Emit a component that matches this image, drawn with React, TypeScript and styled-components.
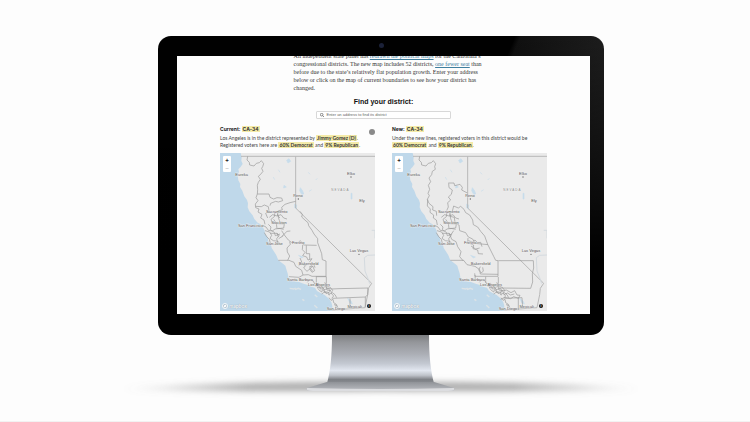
import React from 'react';
import styled, { createGlobalStyle } from 'styled-components';

const Global = createGlobalStyle`
  * { box-sizing: border-box; }
  body { margin: 0; background: #fdfdfd; }
`;

const sans = 'Inter, "Liberation Sans", sans-serif';
const copy = 'Lato, "Liberation Sans", sans-serif';
const serif = '"Liberation Serif", serif';

const Page = styled.main`
  min-height: 100vh;
  padding: 36px 146px 0 158px;
  border-bottom: 1px solid #f2f2f2;
  overflow: hidden;
  font-family: ${sans};
`;

const Monitor = styled.section`
  position: relative;
  padding: 20px 14px 21px 19px;
  border-radius: 13px;
  background:
    linear-gradient(to bottom, transparent 0%, #000 75%),
    linear-gradient(112deg, #010101 63%, #101010 64%, #262626 90%);
`;

const Camera = styled.span`
  position: absolute;
  top: 7px;
  left: 50%;
  width: 5px;
  height: 5px;
  margin-left: -2px;
  border-radius: 50%;
  background: #1b2138;
`;

const Screen = styled.div`
  display: flex;
  flex-direction: column;
  justify-content: flex-end;
  aspect-ratio: 413 / 258;
  padding: 0 43px 3px;
  overflow: hidden;
  background: #fdfdfd;
  color: #222;
`;

const Intro = styled.p`
  align-self: center;
  width: 55%;
  margin: 0 0 5px;
  font: 6px/8px ${serif};
  white-space: nowrap;
  color: #333;
`;

const TextLink = styled.a`
  color: #3f7f9f;
  text-decoration: underline;
`;

const Title = styled.h1`
  margin: 0 0 4px;
  font: 700 7px/10px "Liberation Sans", sans-serif;
  text-align: center;
  color: #111;
`;

const Search = styled.label`
  display: flex;
  align-items: center;
  align-self: center;
  gap: 2px;
  width: 41%;
  height: 9px;
  padding: 0 3px;
  border: 1px solid #d8d8d8;
  border-radius: 1px;
  background: #fff;
`;

const SearchInput = styled.input`
  flex: 1;
  min-width: 0;
  padding: 0;
  border: 0;
  outline: 0;
  background: transparent;
  font: 4px/6px "Liberation Sans", sans-serif;
  &::placeholder { color: #666; opacity: 1; }
`;

const Columns = styled.div`
  display: grid;
  grid-template-columns: 1fr 1fr;
  gap: 17px;
  margin-top: 6px;
`;

const District = styled.section`
  position: relative;
  min-width: 0;
`;

const Subhead = styled.h2`
  margin: 0 0 2px;
  font: 700 5px/8px ${sans};
`;

const Summary = styled.p`
  margin: 0 0 4px;
  font: 5px/7px ${copy};
  white-space: nowrap;
  color: #444;
`;

const Mark = styled.mark`
  padding: 0 1px;
  background: #f4eba9;
  color: #333;
  font-weight: 700;
`;

const Cursor = styled.span`
  position: absolute;
  top: 4px;
  right: 0;
  width: 6px;
  height: 6px;
  border-radius: 50%;
  background: #8a8a8a;
`;

const MapFrame = styled.div`
  position: relative;
  aspect-ratio: 155 / 158;
  overflow: hidden;
`;

const MapArt = styled.svg`
  display: block;
  width: 100%;
  height: 100%;
  font-family: "Liberation Sans", sans-serif;
`;

const ZoomControl = styled.div`
  position: absolute;
  top: 3px;
  left: 3px;
  display: grid;
  width: 8px;
  border-radius: 1px;
  background: #fff;
`;

const ZoomButton = styled.button<{ $muted?: boolean }>`
  height: 8px;
  padding: 0;
  border: 0;
  background: transparent;
  font: 700 6px/8px ${sans};
  text-align: center;
  color: ${(p) => (p.$muted ? '#ccc' : '#222')};
`;

const MapLogo = styled.a`
  position: absolute;
  bottom: 2px;
  left: 2px;
  display: flex;
  align-items: center;
  gap: 1px;
  font: 700 5px/6px ${copy};
  color: #f4f7f9;
  text-decoration: none;
  text-shadow: 0 0 1px #71808c;
`;

const InfoButton = styled.button`
  position: absolute;
  right: 4px;
  bottom: 3px;
  width: 4px;
  height: 4px;
  padding: 0;
  border: 0;
  border-radius: 50%;
  background: #111;
  color: #fff;
  font: 700 3px/4px ${sans};
`;

const Stand = styled.svg`
  display: block;
  width: calc(100% + 84px);
  margin: 0 -42px;
`;

const COAST =
  'M15 15H77L80 28 79 38 83 48 76 58 70 64 72 72 68 80 70 97 76 108 75 117 82 128 88 145 96 156 99 166 98 178 103 190 113 202 118 213 128 224 137 229 145 240 149 248 150 258 158 268 160 280 168 290 170 300 178 312 184 322 190 337 204 347 211 353 214 364 218 376 222 398 236 400 252 402 268 408 280 411 288 416 300 419 306 429 318 436 329 441 342 452 349 463 352 474 352 489H15Z';

const BAY = [
  'M143 232l10 5 7 10 12 2 8-6 12-2 14 3M150 248l14 4 6 10-5 9 10 7 14 2 8 10M148 254l7 12 8 8 3 12 12 3 10-5-3-12 7-9-6-8M160 229l8 8-2 8 12 8 3 10 14-5M172 226l36 2-2 12-18 2M176 214l8 12 2 16M166 256h20l4 10',
  'M163 208l10-8 13 4 12-4 8 10 10 3M180 192l-2 14-10 8 4 12M196 188l-8 8 3 16 5 12',
];

const LA =
  'M277 403l6-7 12 3 4 9 12-2 3 7-7 7M300 413l14 2 2 8 10-1 3 9 11 2 3 9M306 420l16-2 6 7 12-4 6 9-9 6-10-3-7 5M318 410l4 9 14-5 10 4 7 9-5 8 8 9-6 7M324 427l12 10M310 424l10 8 3-8M332 412l4 14 12 2M340 440l12-6 8 6 5 9M329 402l5 10 8-3M342 449l6 8 6-3 2 10 8 5-2 14M357 470l9 2 5 12';

const MAPS = {
  current: [
    'M98 25L96 36 103 43 104 51 117 54 124 46 133 44 139 38 146 47 143 56 140 61 144 70 136 80 130 85 136 94 130 103 127 112 128 125 127 138H162L165 148 176 153 186 149 200 150 203 158 190 162 182 160 167 166 165 173',
    'M127 138L123 149 129 158 121 168 122 179 132 183 129 192 141 199 137 210 147 216 150 229',
    'M122 175L139 176 148 171 160 176 162 190 152 196 158 210',
    'M242 160L225 164 210 169 200 178 202 186 190 188 187 202 195 210',
    'M255 190L262 199 260 207 273 219 279 224 281 233 291 247 297 258 308 272 308 284 320 317 322 335 333 339V385',
    'M200 248L208 261 220 276 229 283 247 286 256 278 266 291 305 292M200 266L216 250 226 249M191 272l14-9',
    'M224 281L226 289 216 300 217 312 224 324 218 337M190 337H222L237 343 242 355 260 367 264 381 280 380 291 385H333M263 291l-1 14 8 8-7 10 12 4 4 9 12-4-8 11M256 345l15 8-5 7 10 10 8-7 7 10 8-5-6-14-10 2M274 292v25h10v16',
    'M304 385V404M304 386h30v34M336 420L350 423 372 422 459 420M352 451L451 447M405 451V480M459 420L458 440 451 447V478',
    'M271 352l12-6 9 10-10 8M284 358l9 12M255 330l6 14-10 9M296 347l4 12M222 386l30 2 12-7',
  ],
  next: [
    'M98 25L96 36 103 43 104 51 117 54 124 46 133 44 139 38 146 47 143 56 145 64 136 70 134 80 126 90 131 101 124 112 128 124 123 136 127 143 121 154 126 166 138 176 137 186 148 190 149 203',
    'M184 105H201L203 113 219 109 226 118 224 126 241 135M185 106L186 119 196 126 193 139 184 147 191 156 182 164 184 177 179 188',
    'M122 154L121 174 130 183 129 193 140 201 139 210 148 216 151 231',
    'M196 190L200 174 214 180 221 175 231 184 236 194 248 201 257 216 259 230 272 237 281 250 293 264 302 289',
    'M190 190L189 205 202 208 204 224 216 231 218 248 236 254 244 267 257 273 264 286 303 290',
    'M200 248L190 263 194 274 207 281 212 296 222 311 218 326 229 339M190 337H230L240 350 264 355 278 365 280 378 333 379',
    'M302 289L320 325 326 337 333 338V385H264L263 376M243 270l-1 14 18 7-2 11 14 4 2 11 14 1M280 356l-5 10 8 9 6-6-2-11M334 338H439L440 360 436 377 437 402 431 421 336 420',
    'M264 381l1 18M296 386V404M334 387v31M352 451L405 449 407 480M394 449V486',
    'M244 278l12 4 8-6 7 8 10-1 4 13M278 300l-12 3-14-9M340 430l18-4 14 8 11-6 7 13 9 1-5 9-14-5-9 6-18-4-12 6M350 440l12-5 8 6 12-3',
  ],
};

type Label = [string, number, number];
const LABELS: Label[] = [
  ['Eureka', 80, 83],
  ['Elko', 408, 82],
  ['Ely', 441, 162],
  ['Reno', 249, 147],
  ['Sacramento', 185, 194],
  ['Stockton', 192, 227],
  ['San Francisco', 107, 236],
  ['San Jose', 178, 290],
  ['Fresno', 250, 287],
  ['Las Vegas', 432, 313],
  ['Bakersfield', 281, 352],
  ['Santa Barbara', 255, 399],
  ['Los Angeles', 312, 413],
  ['Mexicali', 419, 481],
  ['San Diego', 363, 486],
];

function CaliforniaMap({ kind }: { kind: keyof typeof MAPS }) {
  return (
    <MapFrame>
      <MapArt viewBox="15 15 465 474" preserveAspectRatio="xMidYMid slice" role="img" aria-label="California congressional districts">
        <rect x="15" y="15" width="465" height="474" fill="#eaeaea" />
        <path d={COAST} fill="#bfd8ea" />
        <path
          d="M222 32l5 8-8 5-4-8zM256 119l7 10 3 9-6 1-6-11zM239 168l6 3-1 12-5-4zM398 451l10 8 4 9-7-3zM207 112l7 5-8 3zM408 136h3v17h-3zM280 73l5 6M190 65l5 8M175 87l4 8M302 96l5-5M282 130l8-5M250 322l15 5-7 3"
          fill="#c7ddec"
          stroke="#c7ddec"
          strokeWidth="2"
        />
        <path d="M224 421l12 2 6-3M240 425l10-4 8 3M262 454l6 4M299 440l8 7M298 472l9 8" fill="none" stroke="#dde3e6" strokeWidth="4" />
        <g fill="none" stroke="#b8b8b8" strokeWidth="3" strokeLinejoin="round">
          <path d="M78 25H480M242 25V180L470 406L460 421L458 440L450 479L352 486" />
        </g>
        <path d="M480 321l-22 1-10 7 2 40 8 20 6 18M470 247h10v24" fill="none" stroke="#d4dadf" strokeWidth="3" />
        <g fill="none" stroke="#999" strokeWidth="2" strokeLinejoin="round">
          {[...MAPS[kind], ...BAY, LA].map((d) => (
            <path key={d} d={d} />
          ))}
        </g>
        <g fill="#555" textAnchor="middle" stroke="#f2f2f2" strokeWidth="2" paintOrder="stroke" fontSize="12">
          {LABELS.map(([name, x, y]) => (
            <text key={name} x={x} y={y}>{name}</text>
          ))}
          <text x="376" y="129" fontSize="9" letterSpacing="3" fill="#8b8b8b">NEVADA</text>
        </g>
        <g fill="#666">
          <circle cx="408" cy="87" r="2" />
          <circle cx="250" cy="153" r="2" />
          <circle cx="432" cy="319" r="2" />
        </g>
      </MapArt>
      <ZoomControl>
        <ZoomButton type="button" aria-label="Zoom in">+</ZoomButton>
        <ZoomButton type="button" aria-label="Zoom out" $muted>−</ZoomButton>
      </ZoomControl>
      <MapLogo href="#mapbox">
        <svg width="6" height="6" viewBox="0 0 12 12" aria-hidden="true">
          <circle cx="6" cy="6" r="5" fill="#a9bdcb" stroke="#f6f8fa" strokeWidth="2" />
          <path d="M3 9l1-4 3-2 2 3-2 2z" fill="#fff" />
        </svg>
        mapbox
      </MapLogo>
      <InfoButton type="button" aria-label="Map information">i</InfoButton>
    </MapFrame>
  );
}

export default function App() {
  return (
    <>
      <Global />
      <Page>
        <Monitor>
          <Camera />
          <Screen>
            <Intro>
              An independent state panel has <TextLink href="#maps">redrawn the political maps</TextLink> for the California’s<br />
              congressional districts. The new map includes 52 districts, <TextLink href="#seat">one fewer seat</TextLink> than<br />
              before due to the state’s relatively flat population growth. Enter your address<br />
              below or click on the map of current boundaries to see how your district has<br />
              changed.
            </Intro>
            <Title>Find your district:</Title>
            <Search>
              <svg width="4" height="4" viewBox="0 0 12 12" fill="none" stroke="#555" strokeWidth="2" aria-hidden="true">
                <circle cx="5" cy="5" r="4" />
                <path d="M8 8l4 4" />
              </svg>
              <SearchInput aria-label="Address" placeholder="Enter an address to find its district" />
            </Search>
            <Columns>
              <District>
                <Subhead>Current: <Mark>CA-34</Mark></Subhead>
                <Summary>
                  Los Angeles is in the district represented by <Mark>Jimmy Gomez (D)</Mark>.<br />
                  Registered voters here are <Mark>60% Democrat</Mark> and <Mark>9% Republican</Mark>.
                </Summary>
                <CaliforniaMap kind="current" />
                <Cursor />
              </District>
              <District>
                <Subhead>New: <Mark>CA-34</Mark></Subhead>
                <Summary>
                  Under the new lines, registered voters in this district would be<br />
                  <Mark>60% Democrat</Mark> and <Mark>9% Republican</Mark>.
                </Summary>
                <CaliforniaMap kind="next" />
              </District>
            </Columns>
          </Screen>
        </Monitor>
        <Stand viewBox="116 335 530 66" aria-hidden="true">
          <defs>
            <linearGradient id="neck" x1="0" y1="0" x2="0" y2="1">
              <stop offset="0" stopColor="#7b7d80" />
              <stop offset="0.15" stopColor="#94969a" />
              <stop offset="0.4" stopColor="#acafb6" />
              <stop offset="0.6" stopColor="#c4c9d2" />
              <stop offset="0.74" stopColor="#e2e7f0" />
              <stop offset="0.84" stopColor="#bfc3ca" />
              <stop offset="0.93" stopColor="#7d8085" />
              <stop offset="1" stopColor="#8a8d92" />
            </linearGradient>
            <linearGradient id="foot" x1="0" y1="0" x2="0" y2="1">
              <stop offset="0" stopColor="#8f9297" />
              <stop offset="1" stopColor="#bcbec3" />
            </linearGradient>
            <linearGradient id="fade" x1="0" y1="0" x2="1" y2="0">
              <stop offset="0" stopColor="#888" stopOpacity="0" />
              <stop offset="0.25" stopColor="#888" stopOpacity="0.7" />
              <stop offset="0.75" stopColor="#888" stopOpacity="0.7" />
              <stop offset="1" stopColor="#888" stopOpacity="0" />
            </linearGradient>
            <filter id="soft" x="-10%" y="-100%" width="120%" height="300%">
              <feGaussianBlur stdDeviation="3" />
            </filter>
          </defs>
          <path d="M118 389Q230 381 380 382Q530 381 644 389Q530 392 380 391Q230 392 118 389Z" fill="url(#fade)" filter="url(#soft)" />
          <path d="M332 335H429Q429 366 434 383H327Q332 366 332 335Z" fill="url(#neck)" />
          <path d="M327 382H434L454 388Q457 391 448 391H313Q304 391 307 388Z" fill="url(#foot)" />
          <path d="M307 388Q380 390 454 388Q456 391 448 391H313Q305 391 307 388Z" fill="#dcdde0" />
        </Stand>
      </Page>
    </>
  );
}
